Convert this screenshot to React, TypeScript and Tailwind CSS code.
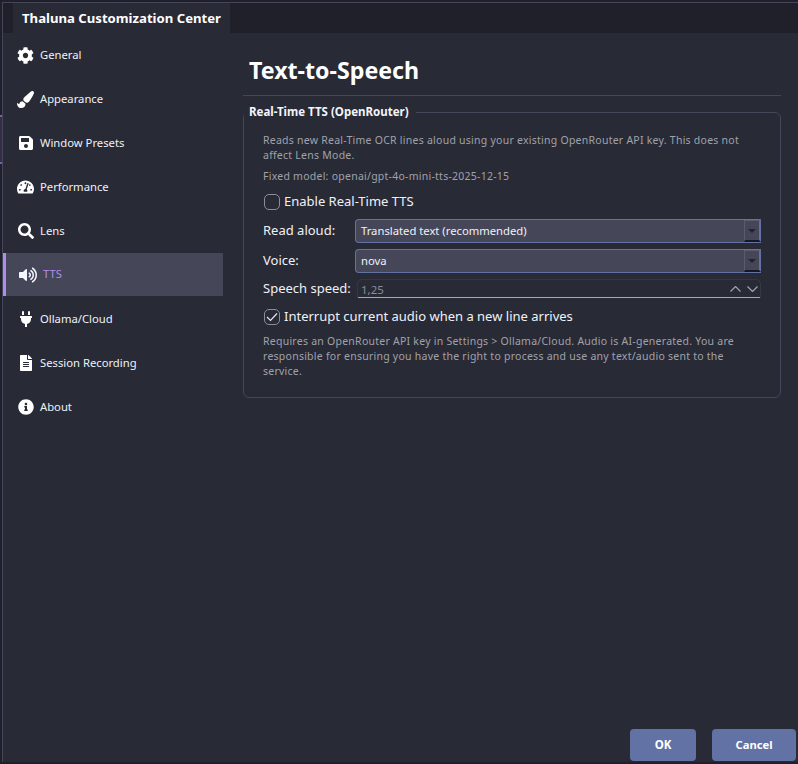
import { ReactNode } from 'react';
import { FaCog, FaPaintBrush, FaSave, FaTachometerAlt, FaSearch, FaVolumeUp, FaPlug, FaFileAlt, FaInfoCircle } from 'react-icons/fa';

const navItems = [
  { label: 'General', icon: <FaCog size={17} /> },
  { label: 'Appearance', icon: <FaPaintBrush size={17} /> },
  { label: 'Window Presets', icon: <FaSave size={16} /> },
  { label: 'Performance', icon: <FaTachometerAlt size={18} /> },
  { label: 'Lens', icon: <FaSearch size={16} /> },
  { label: 'TTS', icon: <FaVolumeUp size={18} />, active: true },
  { label: 'Ollama/Cloud', icon: <FaPlug size={16} /> },
  { label: 'Session Recording', icon: <FaFileAlt size={16} /> },
  { label: 'About', icon: <FaInfoCircle size={16} /> },
];

function NavItem({ label, icon, active }: { label: string; icon: ReactNode; active?: boolean }) {
  if (active) {
    return (
      <div className="h-[43px] w-[220px] flex items-center bg-[#454759] border-l-[3px] border-[#b18cec] text-[#b18cec] text-[11.25px] mb-px">
        <span className="w-[18px] ml-[13px] flex justify-center text-[#f4f6ff]">{icon}</span>
        <span className="ml-[6px]">{label}</span>
      </div>
    );
  }
  return (
    <div className="h-[44px] w-[220px] flex items-center text-[#f0f1f6] text-[11.25px]">
      <span className="w-[17px] ml-[14px] flex justify-center text-white">{icon}</span>
      <span className="ml-[6px]">{label}</span>
    </div>
  );
}

function ComboBox({ value }: { value: string }) {
  return (
    <div className="flex-1 h-[24px] flex items-center justify-between bg-[#454759] border border-[#6272a4] border-r-0 rounded-l-[4px] pl-[5px] text-[#f0f1f6] text-[11.25px]">
      <span>{value}</span>
      <span className="w-[17px] h-[22px] flex items-center justify-center border-l border-t border-[#5a5c6e] border-r-2 border-r-[#6272a4] border-b-2 border-b-[#17181f]">
        <span className="w-0 h-0 border-x-[4px] border-x-transparent border-t-[4px] border-t-[#22232c]" />
      </span>
    </div>
  );
}

export default function App() {
  return (
    <div className="relative w-[798px] h-[764px] pt-[2px] pl-[2px] bg-[#1f2029] overflow-hidden text-[#f0f1f6]" style={{ fontFamily: '"Noto Sans", sans-serif' }}>
      {/* purple edge of the window behind */}
      <div className="absolute left-0 top-[115px] w-[2px] h-[49px] bg-[#352c48] border-y-2 border-[#7a5fa8]" />

      <div className="h-[760px] flex flex-col border-t border-l border-[#44465a] bg-[#282a36]">
        {/* Tab strip */}
        <div className="h-[30px] shrink-0 bg-[#1f2029] pl-[10px]">
          <div className="h-[30px] w-[217px] pt-[2px] bg-[#282a36] flex items-center justify-center font-bold text-[13.15px] text-white">
            Thaluna Customization Center
          </div>
        </div>

        <div className="flex-1 flex min-h-0">
          {/* Sidebar */}
          <div className="w-[240px] shrink-0">
            {navItems.map((item) => (
              <NavItem key={item.label} {...item} />
            ))}
          </div>

          {/* Page */}
          <div className="flex-1 flex flex-col pr-[2px] min-w-0">
            <div className="h-[63px] shrink-0 border-b border-[#44465a] flex items-center pt-[13px] pl-[6px] mr-[15px]">
              <h1 className="text-[23.2px] font-bold text-white">Text-to-Speech</h1>
            </div>

            <div className="relative mt-[16px] mr-[15px] h-[286px] border border-[#44465a] rounded-[6px] pl-[19px] pr-[19px] pt-[20px] text-[#a0a2aa]">
              <div className="absolute -top-[9px] left-[0px] bg-[#282a36] pl-[5px] pr-[7px] text-[11.5px] font-bold text-[#f4f5fa] leading-[16px]">
                Real-Time TTS (OpenRouter)
              </div>
              <p className="text-[10.5px] leading-[15px] tracking-[0.25px]">
                Reads new Real-Time OCR lines aloud using your existing OpenRouter API key. This does not affect Lens Mode.
              </p>
              <p className="text-[10.5px] leading-[15px] tracking-[0.25px] mt-[6px]">
                Fixed model: openai/gpt-4o-mini-tts-2025-12-15
              </p>

              <div className="flex items-center mt-[8px] h-[20px] text-[13px] text-[#f0f1f6]">
                <span className="w-[16px] h-[16px] rounded-[5px] border border-[#8a8c9c] ml-[1px] mr-[4px]" />
                Enable Real-Time TTS
              </div>

              <div className="flex items-center mt-[7px] text-[13px] text-[#f0f1f6]">
                <span className="w-[92px] shrink-0">Read aloud:</span>
                <ComboBox value="Translated text (recommended)" />
              </div>
              <div className="flex items-center mt-[6px] text-[13px] text-[#f0f1f6]">
                <span className="w-[92px] shrink-0">Voice:</span>
                <ComboBox value="nova" />
              </div>

              <div className="flex items-center mt-[6px] text-[13px] text-[#f0f1f6]">
                <span className="w-[94px] shrink-0 whitespace-nowrap">Speech speed:</span>
                <div className="flex-1 h-[19px] flex items-center justify-between rounded-t-[5px] border border-[#353743] border-b-0 shadow-[inset_0_-1px_0_#a8a9ad] pl-[3px] pr-[2px] text-[11.5px] text-[#8a8c98]">
                  <span>1,25</span>
                  <span className="flex gap-[6px]">
                    <svg width="11" height="6" viewBox="0 0 11 6" fill="none" stroke="#9aa6b8" strokeWidth="1.2"><path d="M.5 5.5l5-5 5 5" /></svg>
                    <svg width="11" height="6" viewBox="0 0 11 6" fill="none" stroke="#9aa6b8" strokeWidth="1.2"><path d="M.5 .5l5 5 5-5" /></svg>
                  </span>
                </div>
              </div>

              <div className="flex items-center mt-[8px] h-[20px] text-[13px] text-[#f0f1f6]">
                <span className="w-[16px] h-[16px] rounded-[5px] border border-[#8a8c9c] ml-[1px] mr-[4px] flex items-center justify-center">
                  <svg width="12" height="10" viewBox="0 0 12 10" fill="none" stroke="#e8eaf2" strokeWidth="1.2"><path d="M1 5l3.5 3.5L11 1.5" /></svg>
                </span>
                Interrupt current audio when a new line arrives
              </div>

              <p className="text-[10.5px] leading-[15px] tracking-[0.25px] mt-[7px]">
                Requires an OpenRouter API key in Settings &gt; Ollama/Cloud. Audio is AI-generated. You are responsible for ensuring you have the right to process and use any text/audio sent to the service.
              </p>
            </div>

            <div className="mt-auto flex justify-end gap-[16px] pb-[1px]">
              <button className="w-[66px] h-[32px] rounded-[4px] bg-[#6272a4] text-[11.5px] font-bold text-white">OK</button>
              <button className="w-[84px] h-[32px] rounded-[4px] bg-[#6272a4] text-[11.25px] font-bold text-white">Cancel</button>
            </div>
          </div>
        </div>
      </div>
    </div>
  );
}
